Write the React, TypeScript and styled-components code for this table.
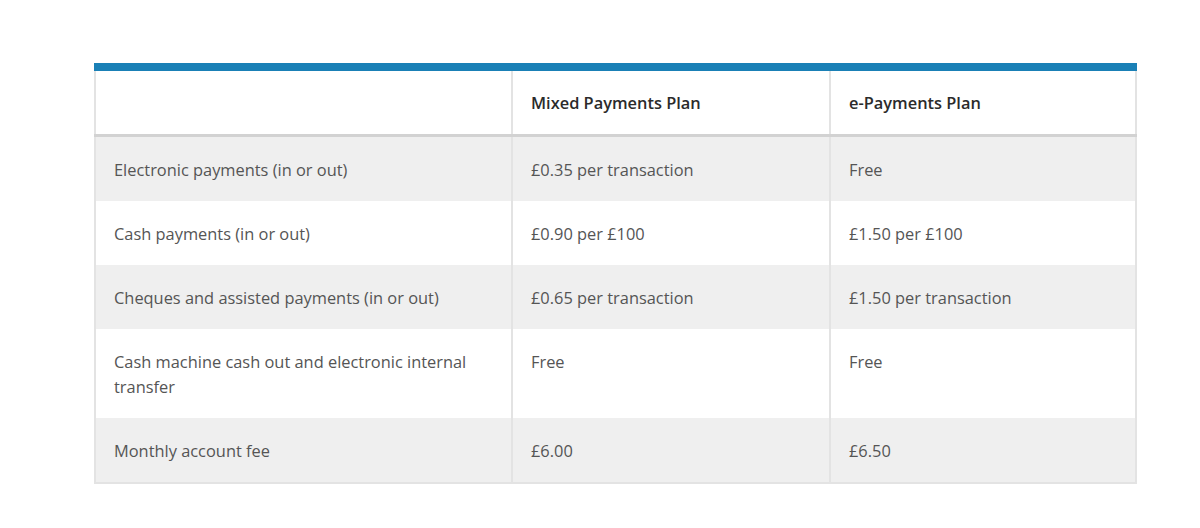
import React from "react";
import styled, { createGlobalStyle } from "styled-components";

const Global = createGlobalStyle`
  html, body { margin: 0; padding: 0; background: #ffffff; }
  body { font-family: "Open Sans", "Noto Sans", Arial, sans-serif; }
`;

const Page = styled.div`
  padding: 63px 0 0 94px;
`;

const Table = styled.table`
  width: 1041px;
  border-collapse: collapse;
  border-top: 8px solid #1a80b6;
  table-layout: fixed;
  font-size: 16.4px;
  line-height: 25px;
`;

const HeadCell = styled.th`
  text-align: left;
  font-weight: 600;
  color: #2b2b2b;
  padding: 19px 20px 19px 18px;
  height: 25px;
  background: #ffffff;
  border-left: 2px solid #e3e3e3;
  border-right: 2px solid #e3e3e3;
  border-bottom: 3px solid #d2d2d2;
  vertical-align: top;
`;

const Row = styled.tr<{ $shaded: boolean }>`
  background: ${(p) => (p.$shaded ? "#efefef" : "#ffffff")};
`;

const Cell = styled.td`
  color: #555555;
  padding: 20px 20px 19px 18px;
  vertical-align: top;
  border-left: 2px solid #e3e3e3;
  border-right: 2px solid #e3e3e3;
`;

const LastRow = styled(Row)`
  border-bottom: 2px solid #e3e3e3;
`;

const rows: [string, string, string][] = [
  ["Electronic payments (in or out)", "£0.35 per transaction", "Free"],
  ["Cash payments (in or out)", "£0.90 per £100", "£1.50 per £100"],
  ["Cheques and assisted payments (in or out)", "£0.65 per transaction", "£1.50 per transaction"],
  ["Cash machine cash out and electronic internal transfer", "Free", "Free"],
  ["Monthly account fee", "£6.00", "£6.50"],
];

export default function App() {
  return (
    <Page>
      <Global />
      <Table>
        <colgroup>
          <col style={{ width: 417 }} />
          <col style={{ width: 318 }} />
          <col style={{ width: 306 }} />
        </colgroup>
        <thead>
          <tr>
            <HeadCell></HeadCell>
            <HeadCell>Mixed Payments Plan</HeadCell>
            <HeadCell>e-Payments Plan</HeadCell>
          </tr>
        </thead>
        <tbody>
          {rows.map((r, i) => {
            const R = i === rows.length - 1 ? LastRow : Row;
            return (
              <R key={i} $shaded={i % 2 === 0}>
                <Cell>{r[0]}</Cell>
                <Cell>{r[1]}</Cell>
                <Cell>{r[2]}</Cell>
              </R>
            );
          })}
        </tbody>
      </Table>
    </Page>
  );
}
